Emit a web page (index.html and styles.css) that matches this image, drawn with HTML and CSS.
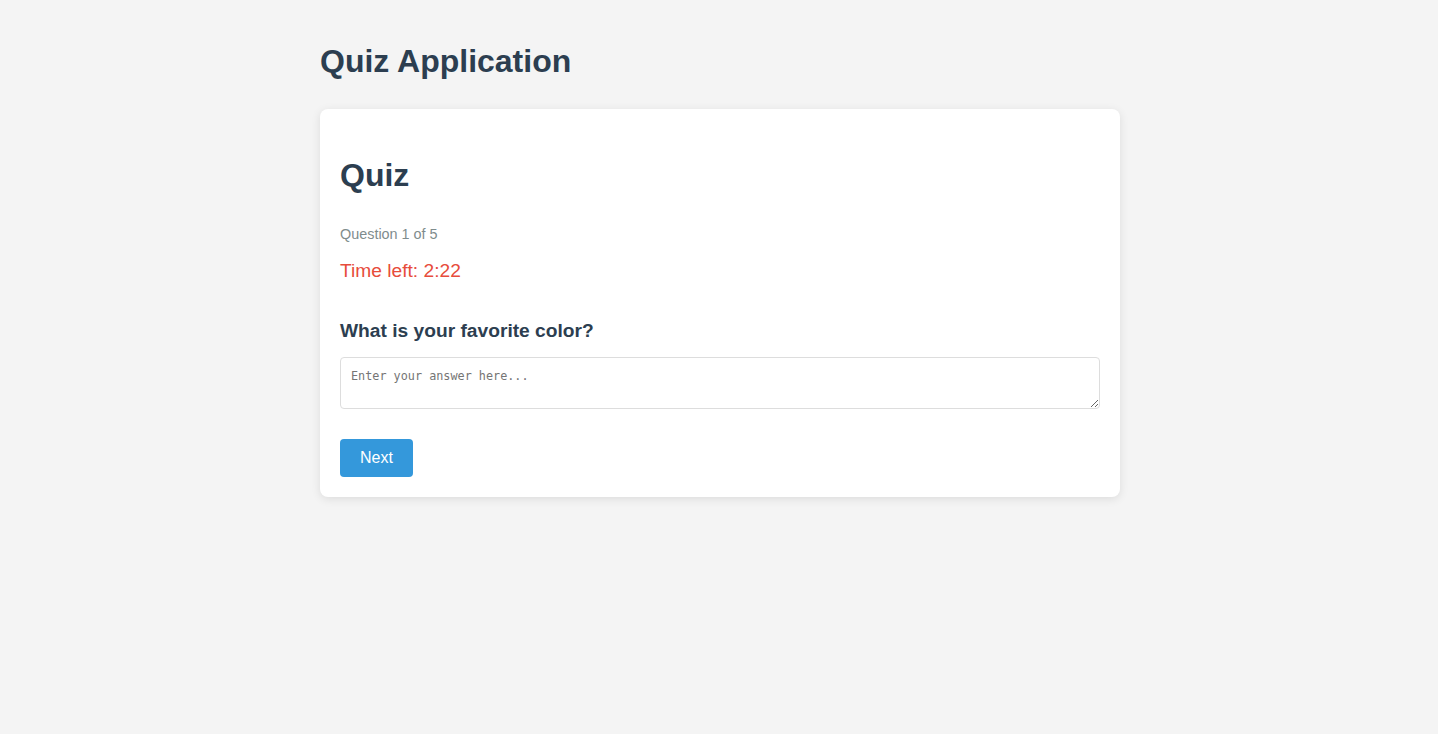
FILE: index.html
```html
<!DOCTYPE html>
<html lang="en">
<head>
<meta charset="utf-8">
<title>Quiz Application</title>
<link rel="stylesheet" href="styles.css">
</head>
<body>
<div class="app">
  <h1 class="app-title">Quiz Application</h1>
  <div class="card">
    <h2 class="quiz-title">Quiz</h2>
    <p class="progress">Question 1 of 5</p>
    <p class="timer">Time left: 2:22</p>
    <h3 class="question">What is your favorite color?</h3>
    <textarea class="answer" placeholder="Enter your answer here..."></textarea>
    <div class="actions">
      <button class="btn" type="button">Next</button>
    </div>
  </div>
</div>
</body>
</html>
```
FILE: styles.css
```css
html, body {
  margin: 0;
  padding: 0;
}
body {
  background: #f4f4f4;
  font-family: "Liberation Sans", Arial, sans-serif;
  color: #2c3e50;
  padding-left: 2px;
}
.app {
  max-width: 800px;
  margin: 0 auto;
  padding: 43px 0 40px;
}
.app-title {
  margin: 0 0 29px;
  font-size: 32px;
  font-weight: bold;
  color: #2c3e50;
}
.card {
  background: #fff;
  border-radius: 8px;
  box-shadow: 0 2px 10px rgba(0, 0, 0, 0.1);
  padding: 20px;
  display: flex;
  flex-direction: column;
}
.quiz-title {
  margin: 28px 0 0;
  font-size: 32px;
  font-weight: bold;
  color: #2c3e50;
}
.progress {
  margin: 32px 0 0;
  font-size: 14.4px;
  color: #7f8c8d;
}
.timer {
  margin: 18px 0 0;
  font-size: 19.2px;
  color: #e74c3c;
}
.question {
  margin: 38px 0 0;
  font-size: 19.2px;
  font-weight: bold;
  color: #2c3e50;
}
.answer {
  margin: 15px 0 0;
  box-sizing: border-box;
  width: 100%;
  height: 52px;
  padding: 11px 10px 10px;
  border: 1px solid #ddd;
  border-radius: 4px;
  font-family: "DejaVu Sans Mono", monospace;
  font-size: 11.8px;
  resize: vertical;
}
.answer::placeholder {
  color: #757575;
}
.actions {
  margin-top: 30px;
  display: flex;
}
.btn {
  background: #3498db;
  color: #fff;
  border: none;
  border-radius: 4px;
  padding: 10px 20px;
  font-family: "Liberation Sans", Arial, sans-serif;
  font-size: 16px;
  line-height: 18px;
  cursor: pointer;
}
```
